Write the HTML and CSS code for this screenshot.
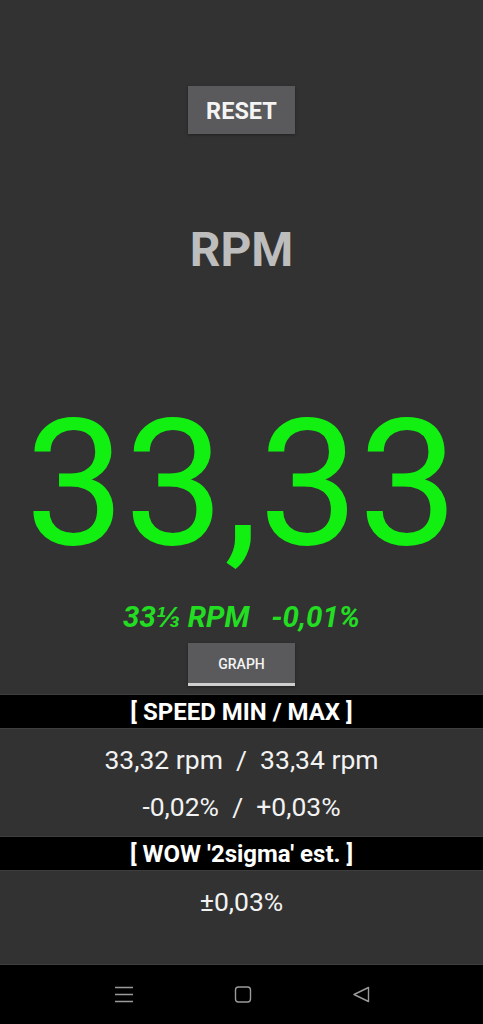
FILE: index.html
```html
<!DOCTYPE html>
<html lang="en">
<head>
    <meta charset="UTF-8">
    <meta name="viewport" content="width=device-width, initial-scale=1.0">
    <title>RPM</title>
    <link rel="stylesheet" href="styles.css">
</head>
<body>

    <div class="screen">
        <div class="top">
            <button class="reset-btn">RESET</button>
            <div class="unit">RPM</div>
            <div class="speed">33,33</div>
            <div class="target">33⅓ RPM   -0,01%</div>
            <button class="graph-btn">GRAPH</button>
        </div>

        <div class="bar">[ SPEED MIN / MAX ]</div>
        <div class="section">
            <div class="line">33,32 rpm  /  33,34 rpm</div>
            <div class="line">-0,02%  /  +0,03%</div>
        </div>

        <div class="bar">[ WOW '2sigma' est. ]</div>
        <div class="section grow">
            <div class="line">±0,03%</div>
        </div>

        <div class="nav">
            <svg width="20" height="17" viewBox="0 0 20 17">
                <path d="M1 1.5h18M1 8.5h18M1 15.5h18" stroke="#9a9a9a" stroke-width="1.4" fill="none"/>
            </svg>
            <svg width="18" height="17" viewBox="0 0 18 17">
                <rect x="1.5" y="1" width="15" height="15" rx="3" stroke="#9a9a9a" stroke-width="1.4" fill="none"/>
            </svg>
            <svg width="18" height="17" viewBox="0 0 18 17">
                <path d="M16.5 1.5v14L2 8.5z" stroke="#9a9a9a" stroke-width="1.4" stroke-linejoin="round" fill="none"/>
            </svg>
        </div>
    </div>

</body>
</html>
```

FILE: styles.css
```css
body {
    margin: 0;
    background-color: #323232;
    font-family: Roboto, "Liberation Sans", sans-serif;
    color: #f2f2f2;
}
.screen {
    height: 1024px;
    display: flex;
    flex-direction: column;
}
.top {
    display: flex;
    flex-direction: column;
    align-items: center;
    padding-top: 86px;
    height: 608px;
}
button {
    font-family: Roboto, "Liberation Sans", sans-serif;
    border: none;
    color: #f4f4f4;
    background-color: #5a5a5c;
    box-shadow: 0 1px 3px rgba(0, 0, 0, 0.35);
}
.reset-btn {
    width: 107px;
    height: 48px;
    font-size: 23.5px;
    font-weight: bold;
    padding-top: 2px;
}
.unit {
    margin-top: 92px;
    font-size: 48px;
    line-height: 48px;
    font-weight: bold;
    color: #bdbdbd;
}
.speed {
    margin-top: 121px;
    font-size: 177px;
    line-height: 177px;
    color: #11f011;
}
.target {
    margin-top: 31px;
    font-size: 29.5px;
    line-height: 29.5px;
    font-weight: bold;
    font-style: italic;
    color: #22dd22;
    white-space: pre;
}
.graph-btn {
    margin-top: 10px;
    width: 107px;
    height: 43px;
    font-size: 14px;
    font-weight: 500;
    border-bottom: 3px solid #cfcfcf;
    padding-top: 3px;
}
.bar {
    height: 33px;
    line-height: 35px;
    background-color: #000;
    text-align: center;
    font-size: 24px;
    font-weight: bold;
    color: #fff;
    border-top: 1px solid #3e3e3e;
}
.section {
    border-top: 1px solid #3e3e3e;
    padding: 7px 0 6px;
    text-align: center;
}
.grow {
    flex: 1;
    border-bottom: 1px solid #3e3e3e;
}
.line {
    font-size: 26.5px;
    line-height: 47px;
    white-space: pre;
}
.nav {
    height: 59px;
    background-color: #000;
    display: flex;
    justify-content: center;
    align-items: center;
    gap: 100px;
}
```
